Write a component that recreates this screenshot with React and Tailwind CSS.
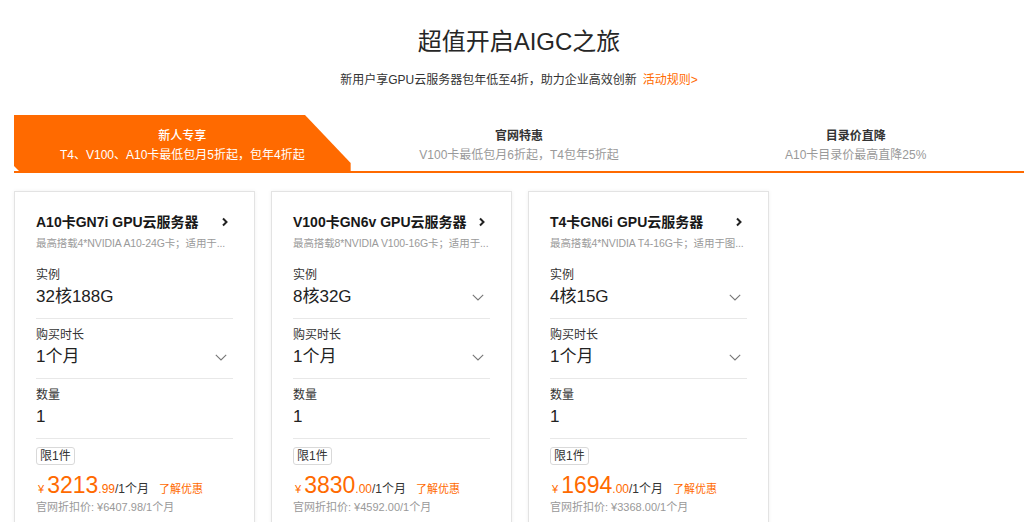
import React from "react";

const FONT = { fontFamily: '"Liberation Sans", Arial, "Noto Sans CJK SC", sans-serif' };

function ChevronRight() {
  return (
    <svg width="8" height="10" viewBox="0 0 8 10" className="shrink-0">
      <polyline points="2,1.5 5.5,5 2,8.5" fill="none" stroke="#222" strokeWidth="2" />
    </svg>
  );
}

function ChevronDown() {
  return (
    <svg width="12" height="7" viewBox="0 0 12 7" className="shrink-0">
      <polyline points="0.8,0.8 6,6 11.2,0.8" fill="none" stroke="#777" strokeWidth="1.1" />
    </svg>
  );
}

function Section({ label, value, chevron }) {
  return (
    <div className="border-b border-[#e8e8e8] pt-[8px] pb-[9px]">
      <div className="h-4 text-[12px] leading-4 text-[#333]">{label}</div>
      <div className="mt-[2px] flex h-6 items-center justify-between pr-[6px]">
        <span className="text-[17px] leading-6 text-[#222]">{value}</span>
        {chevron && <ChevronDown />}
      </div>
    </div>
  );
}

const cards = [
  {
    title: "A10卡GN7i GPU云服务器",
    desc: "最高搭载4*NVIDIA A10-24G卡；适用于...",
    inst: "32核188G",
    instChevron: false,
    price: "3213",
    cents: ".99",
    orig: "6407.98",
  },
  {
    title: "V100卡GN6v GPU云服务器",
    desc: "最高搭载8*NVIDIA V100-16G卡；适用于...",
    inst: "8核32G",
    instChevron: true,
    price: "3830",
    cents: ".00",
    orig: "4592.00",
  },
  {
    title: "T4卡GN6i GPU云服务器",
    desc: "最高搭载4*NVIDIA T4-16G卡；适用于图...",
    inst: "4核15G",
    instChevron: true,
    price: "1694",
    cents: ".00",
    orig: "3368.00",
  },
];

function Card({ c }) {
  return (
    <div className="w-[241px] shrink-0 border border-[#e3e3e3] bg-white px-[21px] pt-[20px] pb-6 shadow-[0_0_4px_rgba(0,0,0,0.06)]">
      <div className="flex h-5 items-center justify-between pr-[4px]">
        <span className="text-[14px] font-bold leading-5 text-[#181818]">{c.title}</span>
        <ChevronRight />
      </div>
      <div className="mt-[3px] whitespace-nowrap text-[10.5px] leading-4 tracking-[-0.1px] text-[#9a9a9a]">
        {c.desc}
      </div>
      <div className="mt-2">
        <Section label="实例" value={c.inst} chevron={c.instChevron} />
        <Section label="购买时长" value="1个月" chevron />
        <Section label="数量" value="1" chevron={false} />
      </div>
      <div className="flex pt-2">
        <span className="rounded-[3px] border border-[#d9d9d9] px-[3px] text-[12px] leading-4 text-[#333]">
          限1件
        </span>
      </div>
      <div className="mt-[6px] flex h-7 items-baseline whitespace-nowrap pl-[2px]">
        <span className="mr-[3px] text-[11px] text-[#ff6a00]">¥</span>
        <span className="text-[23px] leading-7 text-[#ff6a00]">{c.price}</span>
        <span className="text-[12px] text-[#ff6a00]">{c.cents}</span>
        <span className="text-[12px] text-[#333]">/1个月</span>
        <span className="ml-[10px] text-[11px] text-[#ff6a00]">了解优惠</span>
      </div>
      <div className="whitespace-nowrap text-[11px] leading-4 text-[#999]">
        官网折扣价: ¥{c.orig}/1个月
      </div>
    </div>
  );
}

export default function App() {
  return (
    <div className="min-h-screen w-full overflow-hidden bg-white" style={FONT}>
      <div className="ml-[14px] w-[1010px]">
        <div className="pt-[26px] text-center text-[24px] leading-8 text-[#262626]">超值开启AIGC之旅</div>
        <div className="mt-[13px] text-center text-[12px] leading-[18px] text-[#333]">
          新用户享GPU云服务器包年低至4折，助力企业高效创新
          <span className="ml-[6px] text-[#ff6a00]">活动规则&gt;</span>
        </div>
        <div className="mt-[26px] grid h-[58px] grid-cols-3 border-b-2 border-[#ff6a00]">
          <div className="relative flex flex-col items-center justify-center pt-[5px]">
            <div className="absolute inset-x-0 top-0 bottom-[-2px] bg-[#ff6a00] [clip-path:polygon(0_0,291px_0,100%_48px,100%_100%,7px_100%,0_51px)]" />
            <div className="relative text-center text-[12px] leading-[19px] text-white">
              <div className="font-medium">新人专享</div>
              <div>T4、V100、A10卡最低包月5折起，包年4折起</div>
            </div>
          </div>
          <div className="flex flex-col items-center justify-center pt-[5px] text-center text-[12px] leading-[19px]">
            <div className="font-semibold text-[#333]">官网特惠</div>
            <div className="text-[#999]">V100卡最低包月6折起，T4包年5折起</div>
          </div>
          <div className="flex flex-col items-center justify-center pt-[5px] text-center text-[12px] leading-[19px]">
            <div className="font-semibold text-[#333]">目录价直降</div>
            <div className="text-[#999]">A10卡目录价最高直降25%</div>
          </div>
        </div>
        <div className="mt-[18px] flex gap-4">
          {cards.map((c) => (
            <Card key={c.title} c={c} />
          ))}
        </div>
      </div>
    </div>
  );
}
